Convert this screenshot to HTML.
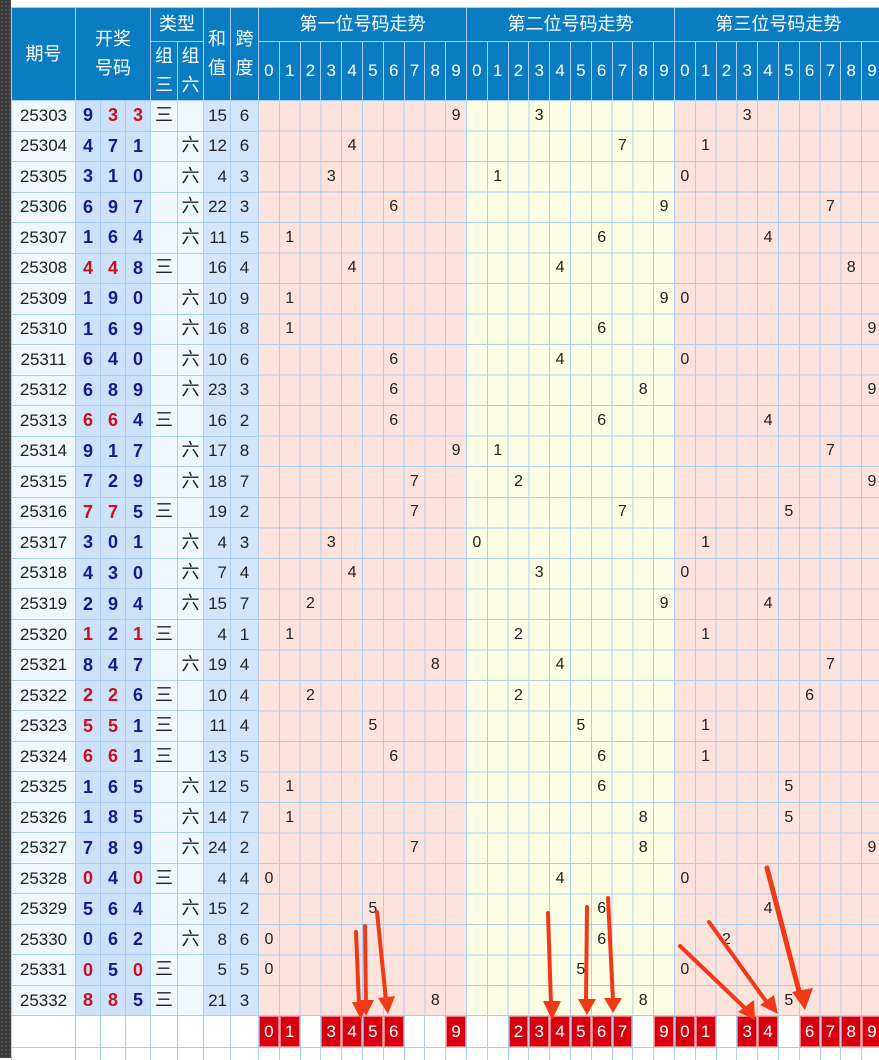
<!DOCTYPE html>
<html><head><meta charset="utf-8">
<style>
*{margin:0;padding:0;box-sizing:border-box}
html,body{width:879px;height:1058px;overflow:hidden;background:#fff;font-family:"Liberation Sans","Noto Sans CJK SC",sans-serif}
.strip{position:absolute;left:0;top:0;width:11px;height:1058px;background:#3b3b3b;background-image:radial-gradient(#555 1px,transparent 1px);background-size:4px 4px}
.g{position:absolute;left:11px;top:7px;padding:1px 0 0 1px;width:900px;display:grid;gap:1px;background:#a9cff2;
grid-template-columns:63px 24px 24px 24px 26px 25px 26px 27px repeat(30,19.8px);
grid-template-rows:33px 58px repeat(30,29.52px) 31px 12px}
.g>div{display:flex;align-items:center;justify-content:center}
.h{background:#0a7dc2;color:#fff;font-size:18px;text-align:center;line-height:29px}
.hd{background:#0a7dc2;color:#fff;font-size:17px}
.p{background:#eef6fe;color:#222;font-size:17px}
.d{background:#cde1f9;color:#101c8c;font-size:18px;font-weight:bold}
.r{color:#c8101e}
.t{background:#eef6fe;color:#222;font-size:18px;line-height:18px;padding-bottom:2px}
.s{background:#d3e5fb;color:#222;font-size:17px}
.g>div.s{justify-content:flex-end;padding-right:3px}
.k{background:#d3e5fb;color:#222;font-size:17px}
.w{background:#fff}
.b{background:#d6000f;color:#fff;font-size:17px;border:1px solid #f07a80}
.tr{grid-area:3/9/33/39;position:relative;
background:repeating-linear-gradient(to right,transparent 0 19.8px,#a9cff2 19.8px 20.8px),repeating-linear-gradient(to bottom,transparent 0 29.52px,#a9cff2 29.52px 30.52px),linear-gradient(to right,#fde3dc 0 207px,#fdfde3 207px 415px,#fde3dc 415px);
display:grid!important;grid-template-columns:repeat(30,20.8px);grid-template-rows:repeat(30,30.52px);align-items:stretch!important;justify-content:start!important}
.tr span{display:flex;align-items:center;justify-content:center;width:19.8px;height:29.52px;font-size:16px;color:#222}
svg{position:absolute;left:0;top:0}
</style></head><body>
<div class="strip"></div>
<div class="g">
<div class="h" style="grid-area:1/1/3/2">期号</div>
<div class="h" style="grid-area:1/2/3/5">开奖<br>号码</div>
<div class="h" style="grid-area:1/5/2/7">类型</div>
<div class="h" style="grid-area:1/7/3/8">和<br>值</div>
<div class="h" style="grid-area:1/8/3/9">跨<br>度</div>
<div class="h" style="grid-area:1/9/2/19">第一位号码走势</div>
<div class="h" style="grid-area:1/19/2/29">第二位号码走势</div>
<div class="h" style="grid-area:1/29/2/39">第三位号码走势</div>
<div class="h" style="grid-area:2/5/3/6">组<br>三</div>
<div class="h" style="grid-area:2/6/3/7">组<br>六</div>
<div class="hd">0</div><div class="hd">1</div><div class="hd">2</div><div class="hd">3</div><div class="hd">4</div><div class="hd">5</div><div class="hd">6</div><div class="hd">7</div><div class="hd">8</div><div class="hd">9</div>
<div class="hd">0</div><div class="hd">1</div><div class="hd">2</div><div class="hd">3</div><div class="hd">4</div><div class="hd">5</div><div class="hd">6</div><div class="hd">7</div><div class="hd">8</div><div class="hd">9</div>
<div class="hd">0</div><div class="hd">1</div><div class="hd">2</div><div class="hd">3</div><div class="hd">4</div><div class="hd">5</div><div class="hd">6</div><div class="hd">7</div><div class="hd">8</div><div class="hd">9</div>

<div class="p">25303</div><div class="d">9</div><div class="d r">3</div><div class="d r">3</div><div class="t">三</div><div class="t"></div><div class="s">15</div><div class="k">6</div>
<div class="tr">
<span style="grid-area:1/10">9</span><span style="grid-area:1/14">3</span><span style="grid-area:1/24">3</span>
<span style="grid-area:2/5">4</span><span style="grid-area:2/18">7</span><span style="grid-area:2/22">1</span>
<span style="grid-area:3/4">3</span><span style="grid-area:3/12">1</span><span style="grid-area:3/21">0</span>
<span style="grid-area:4/7">6</span><span style="grid-area:4/20">9</span><span style="grid-area:4/28">7</span>
<span style="grid-area:5/2">1</span><span style="grid-area:5/17">6</span><span style="grid-area:5/25">4</span>
<span style="grid-area:6/5">4</span><span style="grid-area:6/15">4</span><span style="grid-area:6/29">8</span>
<span style="grid-area:7/2">1</span><span style="grid-area:7/20">9</span><span style="grid-area:7/21">0</span>
<span style="grid-area:8/2">1</span><span style="grid-area:8/17">6</span><span style="grid-area:8/30">9</span>
<span style="grid-area:9/7">6</span><span style="grid-area:9/15">4</span><span style="grid-area:9/21">0</span>
<span style="grid-area:10/7">6</span><span style="grid-area:10/19">8</span><span style="grid-area:10/30">9</span>
<span style="grid-area:11/7">6</span><span style="grid-area:11/17">6</span><span style="grid-area:11/25">4</span>
<span style="grid-area:12/10">9</span><span style="grid-area:12/12">1</span><span style="grid-area:12/28">7</span>
<span style="grid-area:13/8">7</span><span style="grid-area:13/13">2</span><span style="grid-area:13/30">9</span>
<span style="grid-area:14/8">7</span><span style="grid-area:14/18">7</span><span style="grid-area:14/26">5</span>
<span style="grid-area:15/4">3</span><span style="grid-area:15/11">0</span><span style="grid-area:15/22">1</span>
<span style="grid-area:16/5">4</span><span style="grid-area:16/14">3</span><span style="grid-area:16/21">0</span>
<span style="grid-area:17/3">2</span><span style="grid-area:17/20">9</span><span style="grid-area:17/25">4</span>
<span style="grid-area:18/2">1</span><span style="grid-area:18/13">2</span><span style="grid-area:18/22">1</span>
<span style="grid-area:19/9">8</span><span style="grid-area:19/15">4</span><span style="grid-area:19/28">7</span>
<span style="grid-area:20/3">2</span><span style="grid-area:20/13">2</span><span style="grid-area:20/27">6</span>
<span style="grid-area:21/6">5</span><span style="grid-area:21/16">5</span><span style="grid-area:21/22">1</span>
<span style="grid-area:22/7">6</span><span style="grid-area:22/17">6</span><span style="grid-area:22/22">1</span>
<span style="grid-area:23/2">1</span><span style="grid-area:23/17">6</span><span style="grid-area:23/26">5</span>
<span style="grid-area:24/2">1</span><span style="grid-area:24/19">8</span><span style="grid-area:24/26">5</span>
<span style="grid-area:25/8">7</span><span style="grid-area:25/19">8</span><span style="grid-area:25/30">9</span>
<span style="grid-area:26/1">0</span><span style="grid-area:26/15">4</span><span style="grid-area:26/21">0</span>
<span style="grid-area:27/6">5</span><span style="grid-area:27/17">6</span><span style="grid-area:27/25">4</span>
<span style="grid-area:28/1">0</span><span style="grid-area:28/17">6</span><span style="grid-area:28/23">2</span>
<span style="grid-area:29/1">0</span><span style="grid-area:29/16">5</span><span style="grid-area:29/21">0</span>
<span style="grid-area:30/9">8</span><span style="grid-area:30/19">8</span><span style="grid-area:30/26">5</span>
</div>
<div class="p">25304</div><div class="d">4</div><div class="d">7</div><div class="d">1</div><div class="t"></div><div class="t">六</div><div class="s">12</div><div class="k">6</div>
<div class="p">25305</div><div class="d">3</div><div class="d">1</div><div class="d">0</div><div class="t"></div><div class="t">六</div><div class="s">4</div><div class="k">3</div>
<div class="p">25306</div><div class="d">6</div><div class="d">9</div><div class="d">7</div><div class="t"></div><div class="t">六</div><div class="s">22</div><div class="k">3</div>
<div class="p">25307</div><div class="d">1</div><div class="d">6</div><div class="d">4</div><div class="t"></div><div class="t">六</div><div class="s">11</div><div class="k">5</div>
<div class="p">25308</div><div class="d r">4</div><div class="d r">4</div><div class="d">8</div><div class="t">三</div><div class="t"></div><div class="s">16</div><div class="k">4</div>
<div class="p">25309</div><div class="d">1</div><div class="d">9</div><div class="d">0</div><div class="t"></div><div class="t">六</div><div class="s">10</div><div class="k">9</div>
<div class="p">25310</div><div class="d">1</div><div class="d">6</div><div class="d">9</div><div class="t"></div><div class="t">六</div><div class="s">16</div><div class="k">8</div>
<div class="p">25311</div><div class="d">6</div><div class="d">4</div><div class="d">0</div><div class="t"></div><div class="t">六</div><div class="s">10</div><div class="k">6</div>
<div class="p">25312</div><div class="d">6</div><div class="d">8</div><div class="d">9</div><div class="t"></div><div class="t">六</div><div class="s">23</div><div class="k">3</div>
<div class="p">25313</div><div class="d r">6</div><div class="d r">6</div><div class="d">4</div><div class="t">三</div><div class="t"></div><div class="s">16</div><div class="k">2</div>
<div class="p">25314</div><div class="d">9</div><div class="d">1</div><div class="d">7</div><div class="t"></div><div class="t">六</div><div class="s">17</div><div class="k">8</div>
<div class="p">25315</div><div class="d">7</div><div class="d">2</div><div class="d">9</div><div class="t"></div><div class="t">六</div><div class="s">18</div><div class="k">7</div>
<div class="p">25316</div><div class="d r">7</div><div class="d r">7</div><div class="d">5</div><div class="t">三</div><div class="t"></div><div class="s">19</div><div class="k">2</div>
<div class="p">25317</div><div class="d">3</div><div class="d">0</div><div class="d">1</div><div class="t"></div><div class="t">六</div><div class="s">4</div><div class="k">3</div>
<div class="p">25318</div><div class="d">4</div><div class="d">3</div><div class="d">0</div><div class="t"></div><div class="t">六</div><div class="s">7</div><div class="k">4</div>
<div class="p">25319</div><div class="d">2</div><div class="d">9</div><div class="d">4</div><div class="t"></div><div class="t">六</div><div class="s">15</div><div class="k">7</div>
<div class="p">25320</div><div class="d r">1</div><div class="d">2</div><div class="d r">1</div><div class="t">三</div><div class="t"></div><div class="s">4</div><div class="k">1</div>
<div class="p">25321</div><div class="d">8</div><div class="d">4</div><div class="d">7</div><div class="t"></div><div class="t">六</div><div class="s">19</div><div class="k">4</div>
<div class="p">25322</div><div class="d r">2</div><div class="d r">2</div><div class="d">6</div><div class="t">三</div><div class="t"></div><div class="s">10</div><div class="k">4</div>
<div class="p">25323</div><div class="d r">5</div><div class="d r">5</div><div class="d">1</div><div class="t">三</div><div class="t"></div><div class="s">11</div><div class="k">4</div>
<div class="p">25324</div><div class="d r">6</div><div class="d r">6</div><div class="d">1</div><div class="t">三</div><div class="t"></div><div class="s">13</div><div class="k">5</div>
<div class="p">25325</div><div class="d">1</div><div class="d">6</div><div class="d">5</div><div class="t"></div><div class="t">六</div><div class="s">12</div><div class="k">5</div>
<div class="p">25326</div><div class="d">1</div><div class="d">8</div><div class="d">5</div><div class="t"></div><div class="t">六</div><div class="s">14</div><div class="k">7</div>
<div class="p">25327</div><div class="d">7</div><div class="d">8</div><div class="d">9</div><div class="t"></div><div class="t">六</div><div class="s">24</div><div class="k">2</div>
<div class="p">25328</div><div class="d r">0</div><div class="d">4</div><div class="d r">0</div><div class="t">三</div><div class="t"></div><div class="s">4</div><div class="k">4</div>
<div class="p">25329</div><div class="d">5</div><div class="d">6</div><div class="d">4</div><div class="t"></div><div class="t">六</div><div class="s">15</div><div class="k">2</div>
<div class="p">25330</div><div class="d">0</div><div class="d">6</div><div class="d">2</div><div class="t"></div><div class="t">六</div><div class="s">8</div><div class="k">6</div>
<div class="p">25331</div><div class="d r">0</div><div class="d">5</div><div class="d r">0</div><div class="t">三</div><div class="t"></div><div class="s">5</div><div class="k">5</div>
<div class="p">25332</div><div class="d r">8</div><div class="d r">8</div><div class="d">5</div><div class="t">三</div><div class="t"></div><div class="s">21</div><div class="k">3</div>

<div class="w"></div><div class="w"></div><div class="w"></div><div class="w"></div><div class="w"></div><div class="w"></div><div class="w"></div><div class="w"></div>
<div class="b">0</div><div class="b">1</div><div class="w"></div><div class="b">3</div><div class="b">4</div><div class="b">5</div><div class="b">6</div><div class="w"></div><div class="w"></div><div class="b">9</div>
<div class="w"></div><div class="w"></div><div class="b">2</div><div class="b">3</div><div class="b">4</div><div class="b">5</div><div class="b">6</div><div class="b">7</div><div class="w"></div><div class="b">9</div>
<div class="b">0</div><div class="b">1</div><div class="w"></div><div class="b">3</div><div class="b">4</div><div class="w"></div><div class="b">6</div><div class="b">7</div><div class="b">8</div><div class="b">9</div>
<div class="w"></div><div class="w"></div><div class="w"></div><div class="w"></div><div class="w"></div><div class="w"></div><div class="w"></div><div class="w"></div>
<div class="w"></div><div class="w"></div><div class="w"></div><div class="w"></div><div class="w"></div><div class="w"></div><div class="w"></div><div class="w"></div><div class="w"></div><div class="w"></div>
<div class="w"></div><div class="w"></div><div class="w"></div><div class="w"></div><div class="w"></div><div class="w"></div><div class="w"></div><div class="w"></div><div class="w"></div><div class="w"></div>
<div class="w"></div><div class="w"></div><div class="w"></div><div class="w"></div><div class="w"></div><div class="w"></div><div class="w"></div><div class="w"></div><div class="w"></div><div class="w"></div>
</div>
<svg width="879" height="1058" viewBox="0 0 879 1058">
<g stroke="#f03a17" stroke-width="4" stroke-linecap="round" fill="none">
<line x1="356" y1="932" x2="359" y2="1005"/>
<line x1="365" y1="926" x2="366" y2="1005"/>
<line x1="377" y1="912" x2="386" y2="1000"/>
<line x1="548" y1="913" x2="551" y2="1005"/>
<line x1="587" y1="907" x2="586" y2="1002"/>
<line x1="608" y1="898" x2="613" y2="1001"/>
<line x1="680" y1="946" x2="747" y2="1010"/>
<line x1="709" y1="922" x2="768" y2="1004"/>
<line x1="767" y1="868" x2="800" y2="995" stroke-width="5"/>
</g>
<g fill="#f03a17">
<polygon points="352,1002 368,1002 361,1020"/>
<polygon points="358,1000 374,1000 366,1016"/>
<polygon points="378,998 395,996 388,1014"/>
<polygon points="543,1001 561,1001 552,1020"/>
<polygon points="578,999 596,999 587,1015"/>
<polygon points="604,998 622,998 613,1013"/>
<polygon points="738,1012 754,1000 755,1020"/>
<polygon points="760,1005 774,995 778,1014"/>
<polygon points="792,992 813,988 805,1010"/>
</g>
</svg>
</body></html>
